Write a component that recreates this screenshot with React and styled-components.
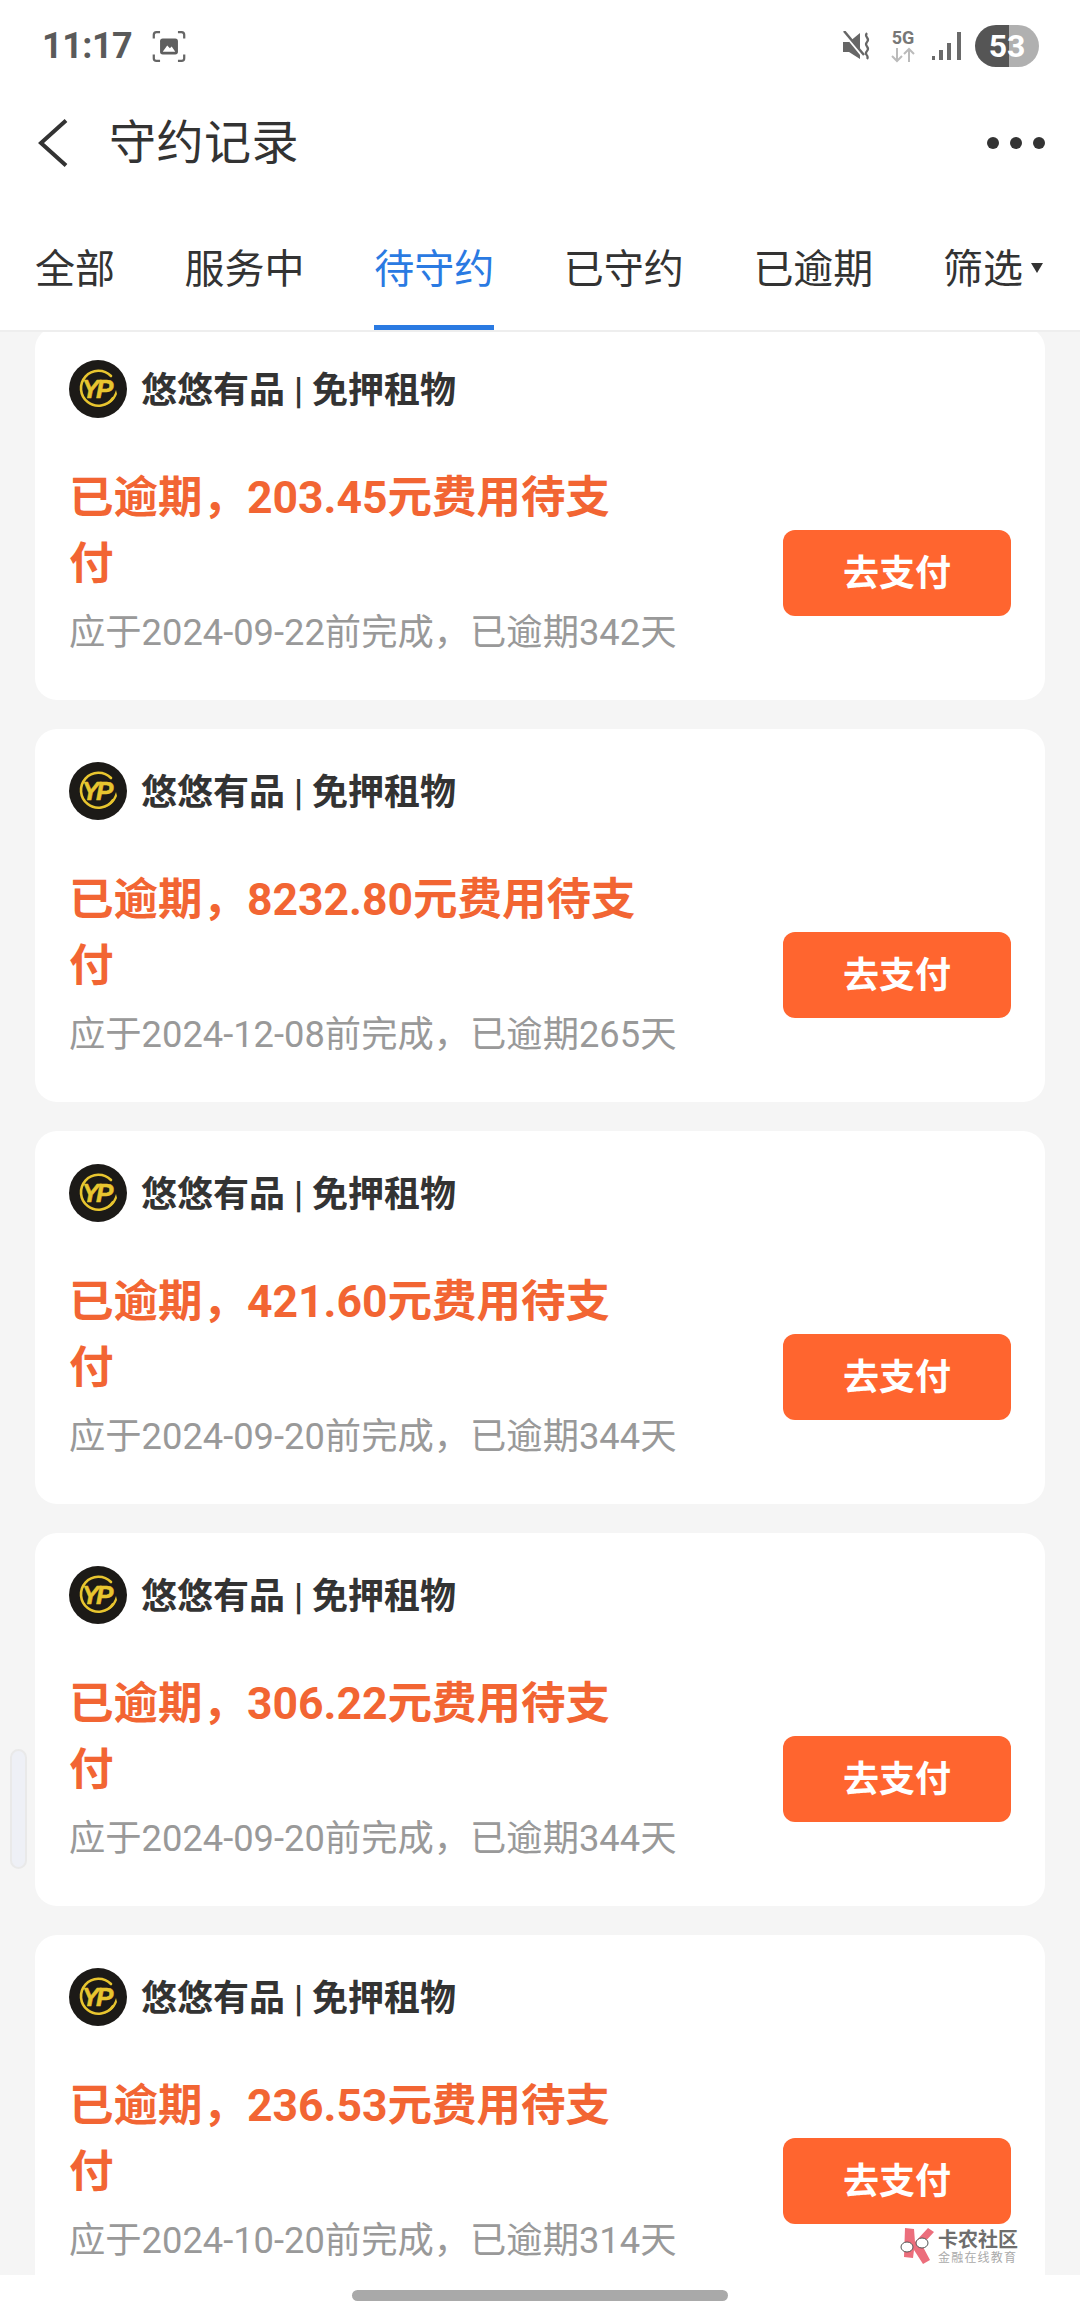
import React from "react";
import styled, { createGlobalStyle } from "styled-components";

const GlobalStyle = createGlobalStyle`
  html, body {
    margin: 0;
    padding: 0;
    background: #fff;
  }
  * {
    box-sizing: border-box;
  }
`;

const Page = styled.div`
  position: relative;
  width: 1080px;
  height: 2316px;
  display: flex;
  flex-direction: column;
  overflow: hidden;
  background: #fff;
  font-family: Roboto, "Noto Sans CJK SC", sans-serif;
`;

const StatusBar = styled.div`
  height: 90px;
  flex: none;
  display: flex;
  align-items: center;
  justify-content: space-between;
  padding: 2px 41px 0 42px;
`;

const StatusLeft = styled.div`
  display: flex;
  align-items: center;
  gap: 20px;
`;

const StatusRight = styled.div`
  display: flex;
  align-items: center;
`;

const Time = styled.span`
  font-size: 36px;
  font-weight: 700;
  color: #5a5a5a;
  letter-spacing: -0.5px;
`;

const NetStack = styled.div`
  display: flex;
  flex-direction: column;
  align-items: center;
  width: 26px;
  margin: 0 16px 0 18px;
`;

const NetLabel = styled.span`
  font-size: 18px;
  line-height: 18px;
  font-weight: 700;
  color: #777;
`;

const Battery = styled.div`
  position: relative;
  width: 64px;
  height: 42px;
  margin-left: 13px;
  border-radius: 21px;
  overflow: hidden;
  display: flex;
  align-items: center;
  justify-content: center;
  background: linear-gradient(90deg, #555 0 53%, #b0b0b0 53% 100%);
  font-size: 32px;
  font-weight: 700;
  color: #fff;
`;

const NavBar = styled.div`
  height: 106px;
  flex: none;
  display: flex;
  align-items: center;
  padding-left: 38px;
  padding-right: 35px;
`;

const Title = styled.div`
  flex: 1;
  margin-left: 41px;
  font-size: 47px;
  line-height: 60px;
  letter-spacing: 0.5px;
  color: #333;
`;

const MoreDots = styled.div`
  display: flex;
  gap: 11px;
`;

const Dot = styled.span`
  width: 12px;
  height: 12px;
  border-radius: 50%;
  background: #333;
`;

const Tabs = styled.div`
  height: 136px;
  flex: none;
  display: flex;
  justify-content: space-between;
  padding: 0 37px 0 35px;
  border-bottom: 2px solid #eeeeee;
`;

const Tab = styled.div`
  display: flex;
  align-items: center;
  padding-top: 11px;
  font-size: 40px;
  color: ${(p) => (p.$active ? "#2a7ae2" : "#333")};
  border-bottom: 5px solid ${(p) => (p.$active ? "#2a7ae2" : "transparent")};
`;

const Caret = styled.span`
  width: 0;
  height: 0;
  margin: 4px 0 0 8px;
  border-left: 6px solid transparent;
  border-right: 6px solid transparent;
  border-top: 10px solid #333;
`;

const List = styled.div`
  flex: 1;
  min-height: 0;
  overflow: hidden;
  background: #f5f5f5;
  padding: 0 35px;
`;

const Card = styled.div`
  height: 373px;
  margin-bottom: 29px;
  padding: 33px 34px 0;
  background: #fff;
  border-radius: 22px;
  &:first-child {
    margin-top: -5px;
  }
`;

const Brand = styled.div`
  display: flex;
  align-items: center;
  height: 58px;
  gap: 14px;
  font-size: 36px;
  font-weight: 700;
  color: #333;
`;

const BrandName = styled.span`
  margin-top: -4px;
`;

const Body = styled.div`
  display: flex;
  align-items: center;
  justify-content: space-between;
  margin-top: 47px;
`;

const Info = styled.div`
  width: 575px;
`;

const Amount = styled.div`
  font-size: 44.5px;
  line-height: 66px;
  font-weight: 700;
  color: #f26533;
`;

const Due = styled.div`
  font-size: 36.3px;
  line-height: 72px;
  color: #999;
  white-space: nowrap;
`;

const PayButton = styled.div`
  width: 228px;
  height: 86px;
  margin-top: 12px;
  padding-bottom: 6px;
  display: flex;
  align-items: center;
  justify-content: center;
  border-radius: 12px;
  background: #ff652f;
  color: #fff;
  font-size: 36px;
  font-weight: 700;
`;

const BottomBar = styled.div`
  height: 41px;
  flex: none;
  display: flex;
  justify-content: center;
  padding-top: 15px;
  background: #fff;
`;

const HomeIndicator = styled.div`
  width: 376px;
  height: 11px;
  border-radius: 6px;
  background: #a9a9a9;
`;

const ScrollHandle = styled.div`
  position: absolute;
  left: 10px;
  top: 1749px;
  width: 17px;
  height: 120px;
  border-radius: 9px;
  background: #eef0f6;
  border: 2px solid #e9e9e9;
`;

const Watermark = styled.div`
  position: absolute;
  left: 900px;
  top: 2227px;
  display: flex;
  gap: 4px;
`;

const WatermarkText = styled.div`
  display: flex;
  flex-direction: column;
  margin-top: 2px;
`;

const WatermarkName = styled.span`
  font-size: 20px;
  line-height: 22px;
  font-weight: 700;
  color: #6e6e6e;
  white-space: nowrap;
`;

const WatermarkSlogan = styled.span`
  font-size: 12px;
  line-height: 14px;
  letter-spacing: 1.2px;
  color: #aaa;
  white-space: nowrap;
`;

const records = [
  { amount: "203.45", date: "2024-09-22", days: 342 },
  { amount: "8232.80", date: "2024-12-08", days: 265 },
  { amount: "421.60", date: "2024-09-20", days: 344 },
  { amount: "306.22", date: "2024-09-20", days: 344 },
  { amount: "236.53", date: "2024-10-20", days: 314 },
];

const tabs = ["全部", "服务中", "待守约", "已守约", "已逾期"];

const ScreenshotIcon = () => (
  <svg width="34" height="33" viewBox="0 0 38 36" fill="none">
    <path
      d="M9 2H5a3 3 0 0 0-3 3v4M29 2h4a3 3 0 0 1 3 3v4M9 34H5a3 3 0 0 1-3-3v-4M29 34h4a3 3 0 0 0 3-3v-4"
      stroke="#666"
      strokeWidth="2.5"
    />
    <rect x="9" y="9" width="20" height="18" rx="3" fill="#5f5f5f" />
    <path d="M12 24l5-7 3 3 2-2 4 6z" fill="#fff" />
  </svg>
);

const MuteIcon = () => (
  <svg width="30" height="30" viewBox="0 0 30 30" fill="none">
    <path d="M1 11h6l11-9v26l-11-7H1z" fill="#666" />
    <path d="M2 2l18 22" stroke="#fff" strokeWidth="3" />
    <path d="M2 0l20 24" stroke="#666" strokeWidth="2.5" />
    <path
      d="M25 2c-4 4 4 5 0 9s4 5 0 9 3 4 0 8"
      stroke="#666"
      strokeWidth="2.2"
    />
  </svg>
);

const NetArrows = () => (
  <svg width="26" height="16" viewBox="0 0 26 16" fill="none">
    <path d="M7 1v13M2 9l5 5 5-5" stroke="#bbb" strokeWidth="2" />
    <path d="M19 15V2M14 7l5-5 5 5" stroke="#bbb" strokeWidth="2" />
  </svg>
);

const SignalIcon = () => (
  <svg width="30" height="30" viewBox="0 0 30 30" fill="#6a6a6a">
    <rect x="0" y="25" width="3" height="4" />
    <rect x="7" y="19" width="4" height="10" />
    <rect x="15" y="12" width="4" height="17" />
    <rect x="25" y="1" width="4" height="28" />
  </svg>
);

const BackIcon = () => (
  <svg width="30" height="48" viewBox="0 0 30 48" fill="none">
    <path d="M28 1.5L3 24l25 22.5" stroke="#333" strokeWidth="4" />
  </svg>
);

const BrandLogo = () => (
  <svg width="58" height="58" viewBox="0 0 58 58" fill="none">
    <circle cx="29" cy="29" r="29" fill="#1c1a17" />
    <path
      d="M42 16A17.5 17.5 0 1 0 44 38"
      stroke="#e8c52f"
      strokeWidth="2.6"
      strokeLinecap="round"
    />
    <path d="M30 45c8 0 14-5 17-15l1 4c-3 8-9 12-18 11z" fill="#e8c52f" />
    <text
      x="27"
      y="38"
      textAnchor="middle"
      fontFamily="Liberation Sans, sans-serif"
      fontSize="26"
      fontStyle="italic"
      letterSpacing="-3"
      fill="#e8c52f"
      stroke="#e8c52f"
      strokeWidth="0.5"
    >
      YP
    </text>
  </svg>
);

const WatermarkLogo = () => (
  <svg width="34" height="37" viewBox="0 0 34 37" fill="none">
    <path d="M5 1l9 1 1 13L28 1l6 4-12 13 8 15-7 4-9-14-1 8-9-1z" fill="#ec6e7c" />
    <ellipse cx="7" cy="20" rx="6" ry="5" fill="#fff" stroke="#555" strokeWidth="1" />
    <ellipse cx="22" cy="16" rx="6" ry="5" fill="#fff" stroke="#555" strokeWidth="1" />
  </svg>
);

const RecordCard = ({ amount, date, days }) => (
  <Card>
    <Brand>
      <BrandLogo />
      <BrandName>悠悠有品 | 免押租物</BrandName>
    </Brand>
    <Body>
      <Info>
        <Amount>{`已逾期，${amount}元费用待支付`}</Amount>
        <Due>{`应于${date}前完成，已逾期${days}天`}</Due>
      </Info>
      <PayButton>去支付</PayButton>
    </Body>
  </Card>
);

const App = () => {
  return (
    <Page>
      <GlobalStyle />
      <StatusBar>
        <StatusLeft>
          <Time>11:17</Time>
          <ScreenshotIcon />
        </StatusLeft>
        <StatusRight>
          <MuteIcon />
          <NetStack>
            <NetLabel>5G</NetLabel>
            <NetArrows />
          </NetStack>
          <SignalIcon />
          <Battery>53</Battery>
        </StatusRight>
      </StatusBar>
      <NavBar>
        <BackIcon />
        <Title>守约记录</Title>
        <MoreDots>
          <Dot />
          <Dot />
          <Dot />
        </MoreDots>
      </NavBar>
      <Tabs>
        {tabs.map((t) => (
          <Tab key={t} $active={t === "待守约"}>
            {t}
          </Tab>
        ))}
        <Tab>
          筛选
          <Caret />
        </Tab>
      </Tabs>
      <List>
        {records.map((r) => (
          <RecordCard key={r.amount} {...r} />
        ))}
      </List>
      <BottomBar>
        <HomeIndicator />
      </BottomBar>
      <ScrollHandle />
      <Watermark>
        <WatermarkLogo />
        <WatermarkText>
          <WatermarkName>卡农社区</WatermarkName>
          <WatermarkSlogan>金融在线教育</WatermarkSlogan>
        </WatermarkText>
      </Watermark>
    </Page>
  );
};

export default App;
